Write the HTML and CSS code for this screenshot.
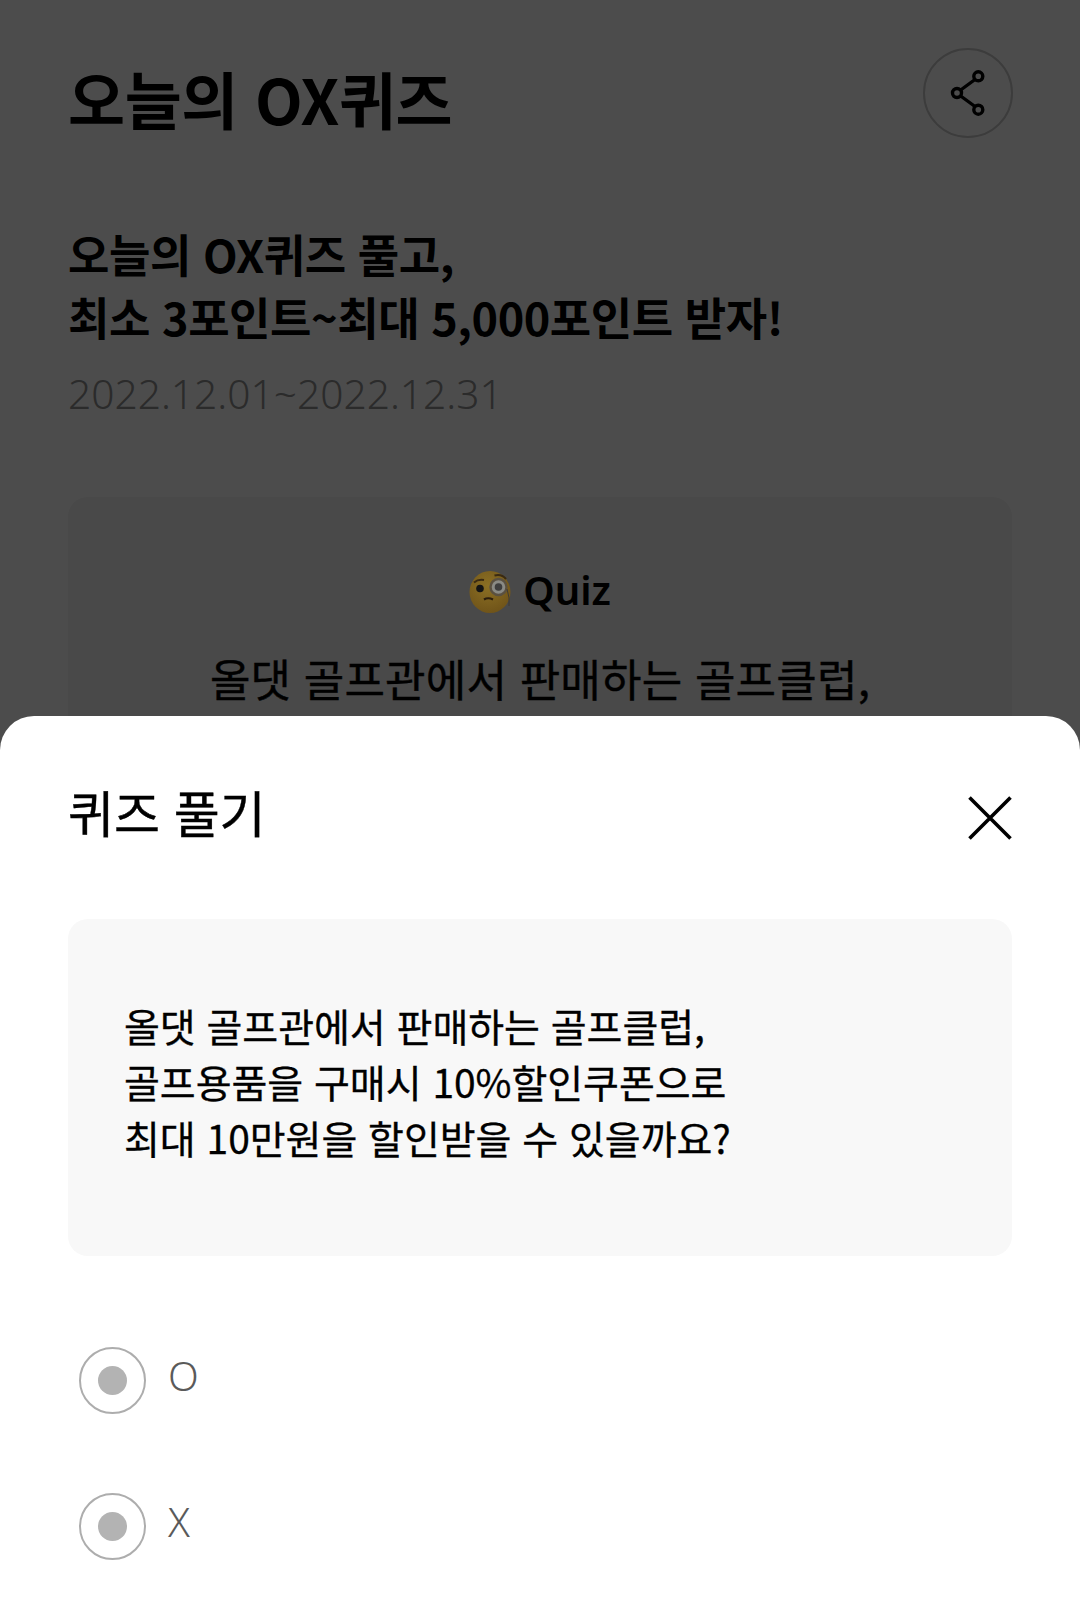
FILE: index.html
```html
<!DOCTYPE html>
<html lang="ko">
<head>
<meta charset="utf-8">
<title>오늘의 OX퀴즈</title>
<link rel="stylesheet" href="styles.css">
</head>
<body>
<main class="page">
  <header class="top">
    <h1 class="title">오늘의 OX퀴즈</h1>
    <button class="share" aria-label="공유">
      <svg width="40" height="50" viewBox="0 0 40 50" fill="none" stroke="#000" stroke-width="3.4">
        <path d="M12 22.500L27 11.500M12 27.500L27 38.500"/>
        <circle cx="9" cy="25" r="4.500"/>
        <circle cx="30.300" cy="8.300" r="4.500"/>
        <circle cx="30.300" cy="41.700" r="4.500"/>
      </svg>
    </button>
  </header>
  <h2 class="headline">오늘의 OX퀴즈 풀고,<br>최소 3포인트~최대 5,000포인트 받자!</h2>
  <p class="period">2022.12.01~2022.12.31</p>
  <section class="quizcard">
    <div class="quizhead">
      <svg class="emoji" width="43" height="44" viewBox="0 0 43 44">
        <defs>
          <radialGradient id="face" cx="45%" cy="35%" r="70%">
            <stop offset="0" stop-color="#8c7024"/>
            <stop offset="1" stop-color="#6e5218"/>
          </radialGradient>
        </defs>
        <ellipse cx="21" cy="22" rx="20.500" ry="21" fill="url(#face)"/>
        <circle cx="11" cy="18.500" r="3.800" fill="#141414"/>
        <path d="M5 12.500Q9 9 15 10" fill="none" stroke="#3a2a12" stroke-width="2"/>
        <path d="M15 29.500Q19 27 24 29.500" fill="none" stroke="#2a1c0c" stroke-width="2.200"/>
        <circle cx="29.500" cy="17" r="8" fill="#8a8a84" stroke="#5a5040" stroke-width="2.400"/>
        <circle cx="29.500" cy="17" r="3.800" fill="#3e3e3e"/>
        <path d="M25.500 5.500Q32.500 3.500 37 9" fill="none" stroke="#3a2a12" stroke-width="2"/>
        <path d="M38 19Q41 28 40 36" fill="none" stroke="#3e3a34" stroke-width="1"/>
      </svg>
      <span class="quizword">Quiz</span>
    </div>
    <p class="quizline">올댓 골프관에서 판매하는 골프클럽,</p>
  </section>
</main>
<div class="overlay"></div>
<section class="sheet">
  <div class="sheethead">
    <h2 class="sheettitle">퀴즈 풀기</h2>
    <button class="close" aria-label="닫기">
      <svg width="44" height="44" viewBox="0 0 44 44" stroke="#000" stroke-width="3.600" fill="none"><path d="M1.500 1.500L42.500 42.500M42.500 1.500L1.500 42.500"/></svg>
    </button>
  </div>
  <div class="question">올댓 골프관에서 판매하는 골프클럽,<br>골프용품을 구매시 10%할인쿠폰으로<br>최대 10만원을 할인받을 수 있을까요?</div>
  <div class="options">
    <label class="option"><span class="radio"><span class="dot"></span></span><span class="optlabel">O</span></label>
    <label class="option"><span class="radio"><span class="dot"></span></span><span class="optlabel">X</span></label>
  </div>
</section>
</body>
</html>
```

FILE: styles.css
```css
* { box-sizing: border-box; }
html, body { margin: 0; padding: 0; }
body {
  width: 1080px;
  height: 1603px;
  overflow: hidden;
  position: relative;
  background: #fff;
  font-family: "Noto Sans CJK KR", "Noto Sans", sans-serif;
  color: #000;
}
.page { padding: 48px 68px 0; }
.top { display: flex; justify-content: space-between; align-items: flex-start; height: 89px; }
.title { margin: 6px 0 0; font-size: 62px; line-height: 88px; font-weight: 700; letter-spacing: -.4px; }
.share {
  width: 90px; height: 90px; padding: 0; margin-right: -1px; background: none;
  border: 2px solid #c8c8c8; border-radius: 50%;
  display: flex; align-items: center; justify-content: center;
}
.headline { margin: 85px 0 0; font-size: 45px; line-height: 63px; font-weight: 700; letter-spacing: -.45px; }
.period { margin: 15px 0 0; font-size: 40.700px; line-height: 60px; font-weight: 300; color: #8f8f8f; font-family: "Noto Sans", sans-serif; }
.quizcard { margin-top: 74px; height: 400px; background: #f3f3f3; border-radius: 20px; padding-top: 69px; text-align: center; }
.quizhead { display: flex; justify-content: center; align-items: center; gap: 11px; height: 48px; }
.emoji { position: relative; z-index: 1; top: 2px; }
.quizword { font-size: 40px; font-weight: 600; font-family: "Noto Sans", sans-serif; line-height: 48px; }
.quizline { margin: 34px 0 0; font-size: 44px; line-height: 60px; font-weight: 400; letter-spacing: .2px; -webkit-text-stroke: .4px #000; }
.overlay { position: absolute; inset: 0; background: rgba(0,0,0,.7); }
.sheet {
  position: absolute; left: 0; right: 0; top: 716px; bottom: 0; z-index: 2;
  background: #fff; border-radius: 34px 34px 0 0; padding: 0 68px;
}
.sheethead { display: flex; justify-content: space-between; align-items: flex-start; padding-top: 60px; height: 203px; }
.sheettitle { margin: 0; font-size: 50px; line-height: 70px; font-weight: 400; letter-spacing: -.1px; -webkit-text-stroke: .4px #000; }
.close { padding: 0; border: 0; background: none; margin-top: 20px; display: block; height: 44px; }
.question {
  height: 337px; background: #f8f8f8; border-radius: 20px;
  padding: 78px 56px 0;
  font-size: 39px; line-height: 56px; letter-spacing: -.05px; font-weight: 400; -webkit-text-stroke: .3px #000;
}
.options { padding: 91px 11px 0; display: flex; flex-direction: column; gap: 80px; }
.option { display: flex; align-items: center; gap: 22px; height: 66px; }
.radio {
  width: 67px; height: 67px; border: 2px solid #adadad; border-radius: 50%;
  display: flex; align-items: center; justify-content: center; flex: none;
}
.dot { width: 29px; height: 29px; border-radius: 50%; background: #b3b3b3; }
.optlabel { font-size: 40px; line-height: 56px; color: #5a5a5a; font-family: "Noto Sans", sans-serif; font-weight: 300; margin-top: -8px; }
```
